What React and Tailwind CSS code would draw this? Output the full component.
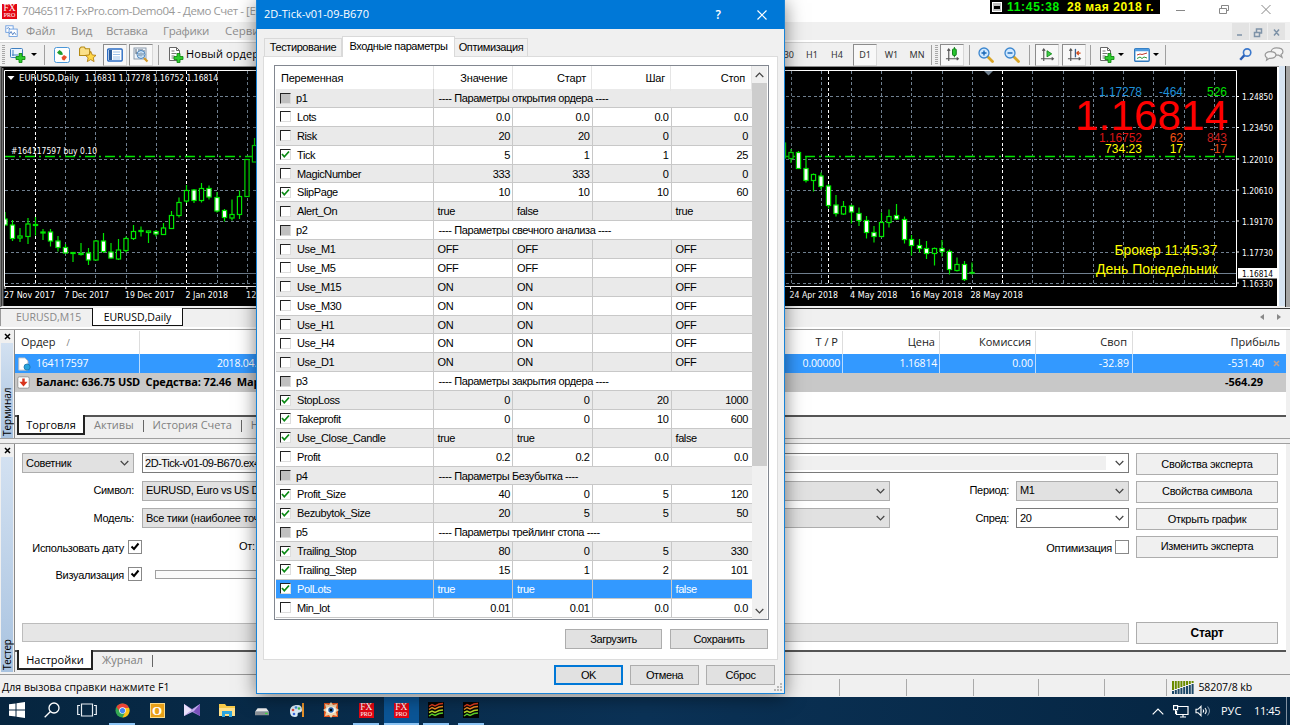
import React from 'react';
import clsx from 'clsx';

const PARAMS = [
  { name: 'p1', section: '---- Параметры открытия ордера ----' },
  { name: 'Lots', values: ['0.0', '0.0', '0.0', '0.0'] },
  { name: 'Risk', values: ['20', '20', '0', '0'] },
  { name: 'Tick', checked: true, values: ['5', '1', '1', '25'] },
  { name: 'MagicNumber', values: ['333', '333', '0', '0'] },
  { name: 'SlipPage', checked: true, values: ['10', '10', '10', '60'] },
  { name: 'Alert_On', text: true, values: ['true', 'false', '', 'true'] },
  { name: 'p2', section: '---- Параметры свечного анализа ----' },
  { name: 'Use_M1', text: true, values: ['OFF', 'OFF', '', 'OFF'] },
  { name: 'Use_M5', text: true, values: ['OFF', 'OFF', '', 'OFF'] },
  { name: 'Use_M15', text: true, values: ['ON', 'ON', '', 'OFF'] },
  { name: 'Use_M30', text: true, values: ['ON', 'ON', '', 'OFF'] },
  { name: 'Use_H1', text: true, values: ['ON', 'ON', '', 'OFF'] },
  { name: 'Use_H4', text: true, values: ['ON', 'ON', '', 'OFF'] },
  { name: 'Use_D1', text: true, values: ['ON', 'ON', '', 'OFF'] },
  { name: 'p3', section: '---- Параметры закрытия ордера ----' },
  { name: 'StopLoss', checked: true, values: ['0', '0', '20', '1000'] },
  { name: 'Takeprofit', checked: true, values: ['0', '0', '10', '600'] },
  { name: 'Use_Close_Candle', checked: true, text: true, values: ['true', 'true', '', 'false'] },
  { name: 'Profit', values: ['0.2', '0.2', '0.0', '0.0'] },
  { name: 'p4', section: '---- Параметры Безубытка ----' },
  { name: 'Profit_Size', checked: true, values: ['40', '0', '5', '120'] },
  { name: 'Bezubytok_Size', checked: true, values: ['20', '5', '5', '50'] },
  { name: 'p5', section: '---- Параметры трейлинг стопа ----' },
  { name: 'Trailing_Stop', checked: true, values: ['80', '0', '5', '330'] },
  { name: 'Trailing_Step', checked: true, values: ['15', '1', '2', '101'] },
  { name: 'PolLots', checked: true, text: true, selected: true, values: ['true', 'true', '', 'false'] },
  { name: 'Min_lot', values: ['0.01', '0.01', '0.0', '0.0'] },
];

// x, wick top, wick bottom, body top, body bottom, filled
const CANDLES = [
  [5, 212, 225, 219, 225, 1], [12.5, 220, 241, 225, 238.5, 1], [20, 228, 242, 236, 238, 0],
  [28, 218, 244, 224, 236.5, 0], [35.5, 217, 235.5, 224.5, 225.5, 0], [43, 229, 240, 232, 233, 0],
  [50.5, 229, 246.5, 232, 241, 1], [58, 236, 251.5, 241, 247.5, 1], [65.5, 244, 253.5, 247.5, 253, 1],
  [73, 252.5, 262, 252.5, 253.5, 0], [81, 243, 255.5, 253.5, 254.5, 0], [88.5, 248, 265, 253, 260, 1],
  [96, 240, 260.5, 241, 260, 0], [103.5, 233, 253, 241, 251.5, 1], [111, 243, 258.5, 252, 258, 1],
  [118.5, 239, 260, 250, 259, 0], [126, 236.5, 252.5, 238.5, 250.5, 0], [133.5, 225, 240, 231.5, 238.5, 0],
  [141, 226.5, 236.5, 230.5, 231.5, 0], [148.5, 230.5, 243, 231, 232.5, 0], [156, 230, 236.5, 231.5, 234, 1],
  [163.5, 223, 235, 228, 234.5, 0], [171.5, 211, 229, 215.5, 228.5, 0], [179, 197.5, 217.5, 202.5, 215.5, 0],
  [186.5, 185, 203, 190.5, 201, 0], [194, 189, 203, 190, 200.5, 1], [201.5, 183, 202.5, 188.5, 200.5, 0],
  [209, 185.5, 199.5, 188.5, 197, 1], [217, 192, 212.5, 197.5, 211, 1], [224.5, 209, 221.5, 210.5, 217.5, 1],
  [232, 199.5, 220.5, 214.5, 218, 0], [239.5, 190.5, 219, 196.5, 214.5, 0], [247, 159, 197, 159.5, 196.5, 0],
  [254.5, 138, 162, 145.5, 162, 0],
  [783.5, 143, 158, 143, 158, 0], [791, 149, 163, 152.5, 158.5, 0], [798.5, 151, 169, 152.5, 168.5, 1],
  [806, 156.5, 182.5, 168.5, 180.5, 1], [813.5, 173.5, 191.5, 174.5, 180.5, 0], [821, 172.5, 189.5, 176, 186.5, 1],
  [828.5, 184, 208.5, 186, 205.5, 1], [836, 195, 216.5, 205, 213.5, 1], [843.5, 201, 215, 206.5, 214, 0],
  [851.5, 204.5, 223.5, 206, 212, 1], [859, 207.5, 226, 213.5, 220.5, 1], [866.5, 216, 238.5, 220.5, 232.5, 1],
  [874, 226, 242.5, 232.5, 236.5, 1], [881.5, 212.5, 237.5, 222.5, 236.5, 0], [889, 209.5, 227.5, 216.5, 222.5, 0],
  [896.5, 204, 220, 215.5, 219, 1], [904.5, 216.5, 243.5, 219.5, 239.5, 1], [911.5, 235, 255.5, 239.5, 245.5, 1],
  [919.5, 239, 252.5, 245.5, 248.5, 1], [926.5, 241, 259, 248.5, 253.5, 1], [934.5, 247.5, 265.5, 248.5, 253.5, 0],
  [942, 240, 256.5, 248.5, 251.5, 1], [949.5, 249.5, 274.5, 251.5, 269.5, 1], [957, 257.5, 271.5, 264.5, 270.5, 0],
  [964.5, 261, 281, 264.5, 279.5, 1], [972, 262.5, 274.5, 272.5, 273, 0],
];

const GRID_X = [65.5, 95.5, 126, 156, 217, 247, 791, 821, 851.5, 881.5, 911.5, 942, 972, 1032.5, 1063, 1093, 1123.5, 1153.5, 1184, 1214];
const GRID_Y = [96.5, 127.5, 159, 190.5, 221.5, 252.5, 283.5];
const PRICES = [
  ['1.24850', 97], ['1.23450', 128], ['1.22010', 159.5], ['1.20610', 190.5],
  ['1.19170', 221.5], ['1.17730', 252.5], ['1.16330', 283.5],
];
const DATES = [
  ['27 Nov 2017', 4, 51], ['7 Dec 2017', 64.5, 44.5], ['19 Dec 2017', 125, 49.5], ['2 Jan 2018', 185.5, 42.5], ['12 Jan 2018', 246, 49],
  ['24 Apr 2018', 789.5, 48.5], ['4 May 2018', 850, 47.5], ['16 May 2018', 910.5, 52], ['28 May 2018', 970.5, 52.5],
];

const Chart = () => (
  <svg className="block shrink-0" width="1290" height="242" viewBox="0 66 1290 242" fontFamily="'DejaVu Sans Condensed', 'DejaVu Sans', sans-serif">
    <rect x="0" y="66" width="1290" height="242" fill="#f0f0f0" />
    <rect x="0" y="66" width="1290" height="1" fill="#8b8b8b" />
    <rect x="1" y="67" width="1276" height="239" fill="#000" />
    <rect x="1277" y="67" width="2" height="239" fill="#fff" />
    <rect x="1279" y="66" width="6" height="240" fill="#d7e4f2" />
    <rect x="1285" y="66" width="1" height="241" fill="#222" />
    <rect x="1286" y="66" width="4" height="241" fill="#a5a5a5" />
    <g stroke="#708090" strokeDasharray="3 2.5" shapeRendering="crispEdges">
      {GRID_X.map((x) => <line key={x} x1={x} x2={x} y1="71" y2="286" />)}
      {GRID_Y.map((y) => <line key={y} x1="5" x2="1237" y1={y} y2={y} />)}
    </g>
    <g stroke="#fff" strokeDasharray="3 2.5" shapeRendering="crispEdges">
      {[35.5, 186.5, 828.5, 1002.5].map((x) => <line key={x} x1={x} x2={x} y1="71" y2="286" />)}
    </g>
    <line x1="5" x2="1237" y1="273.500" y2="273.500" stroke="#708090" />
    <line x1="5" x2="1237" y1="156.500" y2="156.500" stroke="#00e400" strokeWidth="1.300" strokeDasharray="10 4 2 4" />
    {CANDLES.map(([x, wt, wb, bt, bb, filled]) => (
      <g key={x} stroke="#00e600" strokeWidth="1.200">
        <line x1={x} x2={x} y1={wt} y2={wb} />
        <rect x={x - 2.1} y={bt} width="4.200" height={Math.max(bb - bt, 0.5)} fill={filled ? '#fff' : '#000'} />
      </g>
    ))}
    <rect x="0" y="68" width="4" height="238" fill="#000" />
    <rect x="0" y="66" width="1.500" height="241" fill="#777" />
    <rect x="2.300" y="68" width="1" height="238" fill="#aaa" />
    <path d="M4.500 286.500V70.500H1236.500V286.500H4.500" fill="none" stroke="#fff" />
    <path d="M984 71h9l-4.500 4.500z" fill="#708090" />
    <path d="M7.500 76h7l-3.500 4z" fill="#fff" />
    <g stroke="#fff">
      {PRICES.map(([p, y]) => <line key={p} x1="1237" x2="1239" y1={y - 0.5} y2={y - 0.5} />)}
      {DATES.map(([d, x]) => <line key={d} x1={x + 1} x2={x + 1} y1="287" y2="289" />)}
    </g>
    <g fill="#fff" fontSize="9">
      <text x="19" y="81" textLength="60" lengthAdjust="spacingAndGlyphs">EURUSD,Daily</text>
      <text x="85" y="81" textLength="133" lengthAdjust="spacingAndGlyphs">1.16831 1.17278 1.16752 1.16814</text>
      <text x="11" y="154" textLength="86" lengthAdjust="spacingAndGlyphs">#164117597 buy 0.10</text>
      {PRICES.map(([p, y]) => <text key={p} x="1242" y={y + 3.2} textLength="31" lengthAdjust="spacingAndGlyphs">{p}</text>)}
      {DATES.map(([d, x, w]) => <text key={d} x={x} y="298.300" textLength={w} lengthAdjust="spacingAndGlyphs">{d}</text>)}
    </g>
    <rect x="1238" y="268" width="39" height="10.500" fill="#fff" />
    <text x="1242" y="276.700" fontSize="9" textLength="31" lengthAdjust="spacingAndGlyphs">1.16814</text>
    <g fontFamily="'Liberation Sans', sans-serif" fontSize="12" textAnchor="end">
      <text x="1142" y="96" fill="#1e90d8" textLength="43">1.17278</text>
      <text x="1183" y="96" fill="#1e90d8">-464</text>
      <text x="1227" y="96" fill="#00e000">526</text>
      <text x="1142" y="141.500" fill="#dc1414" textLength="43">1.16752</text>
      <text x="1183" y="141.500" fill="#f05014">62</text>
      <text x="1227" y="141.500" fill="#c81e1e">843</text>
      <text x="1142" y="153" fill="#ff0" textLength="37">734:23</text>
      <text x="1183" y="153" fill="#ff0">17</text>
      <text x="1227" y="153" fill="#e04614">-17</text>
      <text x="1228" y="129.500" fill="#f00" fontSize="42" textLength="153">1.16814</text>
      <text x="1217.500" y="255" fill="#ff0" fontSize="14" textLength="103" lengthAdjust="spacingAndGlyphs">Брокер 11:45:37</text>
      <text x="1218" y="274" fill="#ff0" fontSize="14" textLength="122" lengthAdjust="spacingAndGlyphs">День Понедельник</text>
    </g>
  </svg>
);

const Svg = ({ size = 16, children, className }) => (
  <svg width={size} height={size} viewBox="0 0 16 16" fill="none" className={clsx('shrink-0', className)}>{children}</svg>
);

const Plus = () => <path d="M9 6.500h3v3h3v3h-3v3H9v-3H6v-3h3z" fill="#2ecc2e" stroke="#078007" strokeWidth=".8" />;

const NewChartIcon = () => (
  <Svg>
    <rect x=".5" y="1.500" width="12" height="9" rx="1" fill="#eaf4ff" stroke="#3f7fbf" />
    <path d="M3 3v6M2 8h6" stroke="#3f7fbf" />
    <Plus />
  </Svg>
);

const DocPlusIcon = () => (
  <Svg>
    <path d="M1.500.500h7l3 3v10h-10z" fill="#fff" stroke="#666" />
    <path d="M8.500.500v3h3" stroke="#666" />
    <path d="M3.500 4h3M3.500 6.500h5M3.500 9h3M3.500 11h3" stroke="#777" />
    <Plus />
  </Svg>
);

const MarketIcon = () => (
  <Svg>
    <rect x=".5" y=".5" width="15" height="15" rx="2" fill="#fff" stroke="#4a97d8" />
    <path d="M3 5.500L5.500 3 8 5l1 2.500-2 .5-2-.5z" fill="#1f9e2c" />
    <path d="M7.500 10.500L10 8l3 2-2.500 3.500-2-.5z" fill="#e8502a" />
  </Svg>
);

const NavigatorIcon = () => (
  <Svg size={17}>
    <path d="M.5 9V2.500L2 1h3l1 1.500h4V9z" fill="#fbe08a" stroke="#b48a14" />
    <path d="M11 5l1.500 3.400 3.500.4-2.600 2.300.8 3.600-3.200-1.900-3.200 1.900.8-3.600L6 8.800l3.500-.4z" fill="#ffd84a" stroke="#b07a08" strokeWidth=".8" />
  </Svg>
);

const TerminalIcon = () => (
  <Svg>
    <rect x=".7" y="2" width="14.500" height="12" rx="1" fill="#fff" stroke="#2b6cc4" strokeWidth="1.400" />
    <path d="M2 3h3v10H2z" fill="#2d5d9a" />
    <path d="M6 5h7M6 7.500h7M6 10h7M6 12h7" stroke="#9ec3ea" />
  </Svg>
);

const TesterIcon = () => (
  <Svg>
    <rect x="1" y="1" width="12" height="11" fill="#eef4fa" stroke="#8a9aac" />
    <path d="M3 2v5M3 6h2M11 3v5M5 3h5" stroke="#5a6b7c" />
    <circle cx="8" cy="7.500" r="4" fill="#cfe6fb" stroke="#4d86be" />
    <path d="M6 6v3M8 5.500v4M10 6v2.500" stroke="#46637e" strokeWidth=".8" />
    <path d="M11 11l3.500 3.500" stroke="#d49a28" strokeWidth="2.200" />
  </Svg>
);

const ZoomIcon = ({ plus }) => (
  <Svg>
    <path d="M9.500 9.500l5 5" stroke="#d9a526" strokeWidth="2.800" strokeLinecap="round" />
    <circle cx="6" cy="6" r="5" fill="#cfe8ff" stroke="#3d87cf" strokeWidth="1.300" />
    <path d={plus ? 'M3.500 6h5M6 3.500v5' : 'M3.500 6h5'} stroke="#1565b5" strokeWidth="1.400" />
  </Svg>
);

const AxesIcon = ({ children }) => (
  <Svg size={15}>
    <path d="M4 2v13M2.500 4L4 2l1.500 2M1 12.500h13M12.500 11l1.800 1.500-1.800 1.500" stroke="#555" strokeWidth="1.200" />
    {children}
  </Svg>
);

const TemplateIcon = () => (
  <Svg>
    <rect x=".7" y="1.700" width="14.500" height="12.500" rx="1" fill="#fff" stroke="#2e78bd" strokeWidth="1.400" />
    <path d="M1 3h14" stroke="#4f9be0" strokeWidth="2.500" />
    <path d="M3 8l3-1 2 .5L13 6" stroke="#c0392b" />
    <path d="M3 11.500l3-1.500 2 1.500 2-1.500 3 1" stroke="#2a9a3a" />
  </Svg>
);

const Sep = ({ className }) => <div className={clsx('h-5 w-px bg-[#a0a0a0]', className)} />;
const Grip = ({ className }) => <div className={clsx('h-5 w-[3px] bg-[repeating-linear-gradient(#a8a8a8_0_1px,#f0f0f0_1px_2px)]', className)} />;
const Caret = ({ className }) => <div className={clsx('h-0 w-0 border-x-[3px] border-t-[3px] border-x-transparent border-t-black', className)} />;
const Pressed = ({ children, className }) => (
  <div className={clsx('flex h-[22px] w-6 items-center justify-center border border-[#d8d8d8] border-t-[#8c8c8c] border-l-[#8c8c8c] bg-[#f8f8f8]', className)}>
    {children}
  </div>
);

const Toolbar = () => (
  <div className="flex h-[24px] shrink-0 justify-between border-t border-[#d4d4d4] bg-[#f0f0f0] font-['Noto_Sans',sans-serif] text-[9px]">
    <div className="flex items-center pl-[2px]">
      <Grip />
      <div className="ml-[5px]"><NewChartIcon /></div>
      <Caret className="ml-[5px]" />
      <Sep className="ml-[7px]" />
      <div className="ml-[9px]"><MarketIcon /></div>
      <div className="ml-[9px]"><NavigatorIcon /></div>
      <Pressed className="ml-[7px]"><TerminalIcon /></Pressed>
      <Pressed className="ml-[2px]"><TesterIcon /></Pressed>
      <Sep className="ml-[5px]" />
      <div className="ml-[9px]"><DocPlusIcon /></div>
      <span className="ml-[2px] font-['Open_Sans',sans-serif] text-[11px] tracking-[0.1px] text-black">Новый ордер</span>
    </div>
    <div className="flex w-[515px] items-center text-[#333]">
      <span className="w-[19px] text-right">M30</span>
      <span className="ml-[11px] w-[14px] text-center">H1</span>
      <span className="ml-[11px] w-[14px] text-center">H4</span>
      <Pressed className="ml-[9px]">D1</Pressed>
      <span className="ml-[7px] w-[15px] text-center">W1</span>
      <span className="ml-[10px] w-[16px] text-center">MN</span>
      <Sep className="ml-[6px]" />
      <Grip className="ml-[3px]" />
      <Pressed className="ml-[2px]">
        <AxesIcon>
          <path d="M10 0v11" stroke="#0b7a14" />
          <rect x="8" y="2" width="4" height="7" rx="1" fill="#28c52f" stroke="#0b7a14" />
        </AxesIcon>
      </Pressed>
      <Sep className="ml-[5px]" />
      <div className="ml-[8px]"><ZoomIcon plus /></div>
      <div className="ml-[10px]"><ZoomIcon /></div>
      <Sep className="ml-[9px]" />
      <Pressed className="ml-[5px]">
        <AxesIcon><path d="M7.500 4v6.500l5-3.200z" fill="#3ecf46" stroke="#128a1a" /></AxesIcon>
      </Pressed>
      <Pressed className="ml-[3px]">
        <AxesIcon><path d="M9 2v9" stroke="#3a5f8a" strokeWidth="1.400" /><path d="M14.500 6.500h-4M12.500 4.500l-2 2 2 2" stroke="#d04a18" strokeWidth="1.300" /></AxesIcon>
      </Pressed>
      <Sep className="ml-[4px]" />
      <div className="ml-[8px]"><DocPlusIcon /></div>
      <Caret className="ml-[3px]" />
      <div className="ml-[10px]"><TemplateIcon /></div>
      <Caret className="ml-[3px]" />
      <Sep className="ml-[6px]" />
      <Svg size={13} className="ml-[73px]">
        <circle cx="10" cy="5.500" r="4.500" stroke="#3b78cc" strokeWidth="2" />
        <path d="M6.500 9L1.500 14.500" stroke="#2c5fb5" strokeWidth="3" />
      </Svg>
      <svg className="ml-[12px] shrink-0" width="21" height="15" viewBox="0 0 22 16" fill="#f4f4f4" stroke="#999" strokeWidth="1.300">
        <path d="M13 1c4 0 7 1.500 7 4 0 1.500-1 2.500-2 3l1 3-3.500-2.300C11 9 7.500 7.500 7.500 5S10 1 13 1z" />
        <path d="M6.500 5C3 5 1 6.700 1 8.500s1 2.500 2 3L2.500 14l3-2c4 .3 7-1 7-3.500S10 5 6.500 5z" />
      </svg>
    </div>
  </div>
);

const FxLogo = ({ size = 15 }) => (
  <div className="flex flex-col items-center justify-center overflow-hidden bg-[#e30613] font-['Liberation_Serif',serif] text-white" style={{ width: size, height: size }}>
    <span className="text-[9.500px] leading-[8px]">FX</span>
    <span className="text-[6px] leading-[6px]">PRO</span>
  </div>
);

const WindowHeader = () => (
  <>
    <div className="flex h-[22px] shrink-0 items-center justify-between bg-white">
      <div className="flex items-center pl-[2px]">
        <FxLogo />
        <span className="ml-[5px] font-['Open_Sans',sans-serif] text-[11.500px] tracking-[-0.45px] whitespace-nowrap text-[#999]">70465117: FxPro.com-Demo04 - Демо Счет - [EURUSD,Daily]</span>
      </div>
      <div className="flex items-start self-start">
        <div className="flex h-[14px] w-[170px] items-center bg-black pl-[2px] font-['Liberation_Sans',sans-serif] text-[12px] font-bold whitespace-nowrap">
          <span className="flex h-[10px] w-[10px] items-center justify-center border border-white bg-[#c0c0c0]"><i className="h-[3px] w-[6px] bg-black" /></span>
          <span className="ml-[5px] tracking-[0.7px] text-[#00f000]">11:45:38</span>
          <span className="ml-[7px] tracking-[0.55px] text-[#ffff00]">28 мая 2018 г.</span>
        </div>
        <svg width="130" height="20" viewBox="0 0 130 20" fill="none" stroke="#888">
          <path d="M16 10.500h9M59.500 8.500h7v5h-7zM61.500 8.500v-3h7v5h-2M101.500 5l9 9M110.500 5l-9 9" />
        </svg>
      </div>
    </div>
    <div className="flex h-[18px] shrink-0 items-center bg-[#f0f0f0] pl-[5px] font-['Open_Sans',sans-serif] text-[11.500px] text-[#8d8d8d]">
      <Svg size={13}>
        <rect x="1" y="1" width="9" height="8" fill="#fff" stroke="#5b93dd" />
        <rect x="5" y="5" width="10" height="9" fill="#fff" stroke="#5b93dd" />
        <path d="M5.500 11l2-3 2 4 2-3 2 3M2 5l2-2 2 2" stroke="#3c70bb" />
      </Svg>
      <span className="ml-[8px] w-[45px]">Файл</span>
      <span className="w-[35px]">Вид</span>
      <span className="w-[57px] tracking-[-0.3px]">Вставка</span>
      <span className="w-[62px] tracking-[-0.3px]">Графики</span>
      <span className="w-[60px]">Сервис</span>
      <div className="mr-[5px] ml-auto flex gap-px">
        <svg width="53" height="17" viewBox="0 0 53 17" fill="none">
          <path d="M0 0h17v17H0zM18 0h17v17H18zM36 0h17v17H36z" fill="#e3e3e3" />
          <path d="M5 12h5M22.500 9.500h5v4h-5zM24.500 9.500v-3.500h5v4h-2M42 6.500l5 6M47 6.500l-5 6" stroke="#7f93a8" strokeWidth="1.500" />
        </svg>
      </div>
    </div>
    <div className="h-[2px] shrink-0 bg-white" />
  </>
);

const ChartTabs = () => (
  <div className="flex h-[19px] shrink-0 justify-between bg-[#f0f0f0] font-['Open_Sans',sans-serif] text-[10.500px]">
    <div className="flex w-full border-t border-[#333]">
      <span className="h-[17px] w-[92px] border-l border-[#999] pl-[15px] leading-[17px] text-[#888]">EURUSD,M15</span>
      <span className="-mt-px h-[18px] w-[91px] border border-t-0 border-[#111] bg-white text-center leading-[18px] text-black">EURUSD,Daily</span>
      <div className="mt-[5px] mr-[9px] ml-auto flex gap-[13px]">
        <i className="h-0 w-0 border-y-[3px] border-r-[4px] border-y-transparent border-r-[#888]" />
        <i className="h-0 w-0 border-y-[3px] border-l-[4px] border-y-transparent border-l-[#888]" />
      </div>
    </div>
  </div>
);

const SideStrip = ({ label }) => (
  <div className="flex w-[14px] shrink-0 flex-col items-center bg-[#f0f0f0]">
    <svg className="my-[3px] shrink-0" width="7" height="7" viewBox="0 0 7 7" stroke="#000" strokeWidth="1.500"><path d="M1 1l5 5M6 1L1 6" /></svg>
    <div className="flex w-3 grow items-start bg-linear-to-b from-[#d3e1f1] to-[#a9c3e0] [writing-mode:vertical-rl]">
      <span className="h-full rotate-180 pt-[2px] font-['Open_Sans',sans-serif] text-[10px] leading-[12px] text-black">{label}</span>
    </div>
  </div>
);

const PanelTabs = ({ active, activeClass, rest }) => (
  <div className="flex h-[21px] shrink-0 border-t-2 border-[#555] bg-[#f0f0f0] pl-[2px] text-[11px] text-[#808080]">
    <span className={clsx('-mt-[2px] h-[20px] border-2 border-t-0 border-[#222] bg-white text-center leading-[19px] text-black', activeClass)}>{active}</span>
    {rest.map((t) => (
      <span key={t} className="flex h-[17px] items-center whitespace-nowrap">
        <span className="px-[9px]">{t}</span>
        <i className="h-3 w-px bg-[#666]" />
      </span>
    ))}
  </div>
);

const TERMINAL_GRID = 'grid grid-cols-[125px_703px_97px_96px_97px_153px] items-stretch';

const Terminal = () => (
  <div className="flex h-[110px] shrink-0 border-t border-b border-[#a0a0a0] bg-[#f0f0f0] font-['Open_Sans',sans-serif] text-[11px]">
    <SideStrip label="Терминал" />
    <div className="mr-[4px] flex grow flex-col border-l border-[#888] bg-white pt-px">
      <div className={clsx(TERMINAL_GRID, 'h-[23px] leading-[22px] text-[#222] [&>*]:border-r [&>*]:border-[#ddd]')}>
        <span className="pl-[6px]">Ордер <span className="ml-[8px] text-[9px] text-[#777]">/</span></span>
        <span className="pr-[4px] text-right">T / P</span>
        <span className="pr-[4px] text-right">Цена</span>
        <span className="pr-[4px] text-right">Комиссия</span>
        <span className="pr-[5px] text-right">Своп</span>
        <span className="border-r-0! pr-[6px] text-right">Прибыль</span>
      </div>
      <div className={clsx(TERMINAL_GRID, 'h-[19px] bg-[#3399ff] text-[10.500px] leading-[19px] text-white [&>*]:border-r [&>*]:border-[#b9dcff]')}>
        <span className="flex items-center pl-[2px]">
          <Svg size={14}>
            <path d="M2 1h7l3.500 3.500V15H2z" fill="#fff" stroke="#bbb" />
            <circle cx="11.500" cy="11.500" r="3.500" fill="#27a3dc" stroke="#1a78b0" />
          </Svg>
          <span className="ml-[5px] tracking-[-0.2px]">164117597</span>
        </span>
        <span className="flex justify-between pr-[2px] pl-[77px] tracking-[-0.2px]"><span>2018.04.</span><span>0.00000</span></span>
        <span className="pr-[2px] text-right tracking-[-0.2px]">1.16814</span>
        <span className="pr-[2px] text-right">0.00</span>
        <span className="pr-[3px] text-right">-32.89</span>
        <span className="flex items-center justify-end border-r-0! pr-[6px]">
          -531.40
          <svg className="ml-[9px]" width="7" height="7" viewBox="0 0 7 7" stroke="#c0a090" strokeWidth="1.600"><path d="M1 1l5 5M6 1L1 6" /></svg>
        </span>
      </div>
      <div className="flex h-[19px] items-center bg-[#c8c8c8] pr-[23px] pl-[2px] text-[11px] font-bold whitespace-pre text-black">
        <Svg size={13}>
          <rect x="1" y="1" width="14" height="14" rx="2" fill="#fff" stroke="#888" />
          <path d="M6.500 3h3v4H13l-5 6-5-6h3.500z" fill="#d8341c" />
        </Svg>
        <span className="ml-[6px] tracking-[-0.12px]">Баланс: 636.75 USD  Средства: 72.46  Маржа</span>
        <span className="ml-auto">-564.29</span>
      </div>
      <div className="grow" />
      <PanelTabs active="Торговля" activeClass="w-[68px]" rest={['Активы', 'История Счета', 'Новости']} />
      <div className="h-[2px] bg-[#f0f0f0]" />
    </div>
  </div>
);

const Chevron = ({ up }) => (
  <svg width="9" height="6" viewBox="0 0 9 6" fill="none" stroke="#444" strokeWidth="1.200" className="shrink-0">
    <path d={up ? 'M.7 5l3.800-4 3.800 4' : 'M.7 1l3.800 4 3.800-4'} />
  </svg>
);

const Select = ({ children, white, className }) => (
  <div className={clsx('flex h-[20px] items-center justify-between border pr-[4px] pl-[3px] whitespace-nowrap', white ? 'border-[#7a7a7a] bg-white' : 'border-[#adadad] bg-[#e1e1e1]', className)}>
    <span>{children}</span>
    <Chevron />
  </div>
);

const CheckBox = ({ checked }) => (
  <div className="flex h-[14px] w-[14px] items-center justify-center border border-[#888] bg-white">
    {checked && <svg width="10" height="10" viewBox="0 0 10 10" fill="none" stroke="#000" strokeWidth="2"><path d="M1.500 4.500L4 7l4.500-5.500" /></svg>}
  </div>
);

const Button = ({ children, className }) => (
  <button className={clsx('flex items-center justify-center border', className)}>{children}</button>
);

const TesterPanel = () => (
  <div className="mt-[4px] flex h-[229px] shrink-0 border-t border-[#a0a0a0] bg-[#f0f0f0] font-['Liberation_Sans',sans-serif] text-[11px] tracking-[-0.3px] text-black">
    <SideStrip label="Тестер" />
    <div className="mr-[4px] flex grow flex-col border-l border-[#888] bg-white">
      <div className="flex grow gap-[7px] pt-[9px] pr-[8px] pl-[7px]">
        <div className="flex w-[1107px] flex-col">
          <div className="flex h-[20px] gap-[8px]">
            <Select className="w-[112px]">Советник</Select>
            <div className="flex h-[20px] grow items-center border border-[#7a7a7a] bg-white p-[2px] pr-[4px]">
              <span className="h-full grow bg-[#f0f0f0] leading-[14px] tracking-[-0.45px]">2D-Tick-v01-09-B670.ex4</span>
              <span className="ml-[9px]"><Chevron /></span>
            </div>
          </div>
          <div className="mt-[7.500px] flex h-[20px] items-center gap-[8px]">
            <span className="w-[112px] text-right">Символ:</span>
            <Select className="w-[748px]">EURUSD, Euro vs US Dollar</Select>
            <span className="ml-auto">Период:</span>
            <Select className="-ml-px w-[113px]">M1</Select>
          </div>
          <div className="mt-[7.500px] flex h-[20px] items-center gap-[8px]">
            <span className="w-[112px] text-right">Модель:</span>
            <Select className="w-[748px]">Все тики (наиболее точный метод)</Select>
            <span className="ml-auto">Спред:</span>
            <Select white className="-ml-px w-[113px]">20</Select>
          </div>
          <div className="mt-[12px] flex h-[14px] items-center">
            <span className="w-[102px] pt-[2px] text-right tracking-[-0.3px] whitespace-nowrap">Использовать дату</span>
            <div className="ml-[4px]"><CheckBox checked /></div>
            <span className="ml-[97px] pb-[2px]">От:</span>
            <span className="mr-[3px] ml-auto pt-[2px]">Оптимизация</span>
            <CheckBox />
          </div>
          <div className="mt-[13px] flex h-[14px] items-center">
            <span className="w-[102px] pt-[2px] text-right">Визуализация</span>
            <div className="ml-[4px]"><CheckBox checked /></div>
            <div className="ml-[13px] h-[9px] w-[400px] border border-[#a0a0a0] bg-[#fafafa]" />
          </div>
          <div className="mt-auto mb-[8px] h-[19px] border border-[#bcbcbc] bg-[#e6e6e6]" />
        </div>
        <div className="flex w-[142px] flex-col gap-[5.500px]">
          {['Свойства эксперта', 'Свойства символа', 'Открыть график', 'Изменить эксперта'].map((t) => (
            <Button key={t} className="h-[22px] border-[#adadad] bg-[#f0f0f0]">{t}</Button>
          ))}
          <Button className="mt-auto mb-[6px] h-[22px] border-[#adadad] bg-[#f0f0f0] text-[12px] font-bold">Старт</Button>
        </div>
      </div>
      <div className="font-['Open_Sans',sans-serif] tracking-normal">
        <PanelTabs active="Настройки" activeClass="w-[76px]" rest={['Журнал']} />
      </div>
      <div className="h-px bg-[#f0f0f0]" />
    </div>
  </div>
);

const StatusBar = () => (
  <div className="mt-[2px] flex h-[23px] shrink-0 items-center justify-between border-t border-[#999] bg-[#f0f0f0] pt-[3px] font-['Open_Sans',sans-serif] text-[10.500px] text-black">
    <span className="pl-[2px] tracking-[0.05px]">Для вызова справки нажмите F1</span>
    <div className="flex h-[17px] items-center [&>i]:h-full [&>i]:w-px [&>i]:bg-[#aaa]">
      <i /><i className="ml-[66px]" /><i className="ml-[66px]" /><i className="ml-[64px]" /><i className="ml-[65px]" /><i className="ml-[61px]" />
      <svg className="ml-[5px]" width="22" height="13" viewBox="0 0 22 13">
        {[0, 1, 2, 3, 4, 5, 6, 7].map((i) => (
          <g key={i}>
            <rect x={i * 2.8} y="0" width="2" height={9 - i} fill="#6b8c00" />
            <rect x={i * 2.8} y={10 - i} width="2" height={3 + i} fill="#1c4868" />
          </g>
        ))}
      </svg>
      <span className="mr-[38px] ml-[4px] tracking-[-0.1px]">58207/8 kb</span>
    </div>
  </div>
);

const ChartsIcon = () => (
  <Svg>
    <rect width="16" height="16" fill="#050505" />
    <path d="M1 4.500l3-2 3 1.500 4-2 4-.5" stroke="#e03a1c" strokeWidth="1.400" />
    <path d="M1 7.500l3-2 3 1.500 4-2 4-.5" stroke="#f08a24" strokeWidth="1.400" />
    <path d="M1 10.500l3-1.500 3 1.500 4-2 4-.5" stroke="#b8d828" strokeWidth="1.400" />
    <path d="M1 14l3-2 3 1.500 4-2 4-.5" stroke="#5ad028" strokeWidth="1.400" />
  </Svg>
);

const TASKS = [
  { id: 'start', icon: <Svg><path d="M0 2.300l6.500-.9v6.100H0zM7.500 1.200L16 0v7.500H7.500zM0 8.500h6.500v6.100L0 13.700zM7.500 8.500H16V16l-8.500-1.200z" fill="#fff" /></Svg> },
  { id: 'search', icon: <Svg><circle cx="10" cy="6" r="5" stroke="#fff" strokeWidth="1.300" /><path d="M6.500 9.500L.7 15.300" stroke="#fff" strokeWidth="1.300" /></Svg> },
  { id: 'view', icon: <svg width="20" height="14" viewBox="0 0 20 14" fill="none" stroke="#e8eef4" strokeWidth="1.200"><path d="M4.500 1h11v12h-11zM3 2.500H.7v9H3M17 2.500h2.300v9H17" /></svg> },
  {
    id: 'chrome', open: true,
    icon: (
      <Svg size={15}>
        <circle cx="8" cy="8" r="7.500" fill="#34a853" />
        <path d="M1.500 4.300A7.500 7.500 0 0115 5.300H8A3 3 0 005.300 9z" fill="#ea4335" />
        <path d="M15 5.300A7.500 7.500 0 018 15.500L11 9.500 9.500 5.300z" fill="#fbc116" />
        <circle cx="8" cy="8" r="3.500" fill="#fff" /><circle cx="8" cy="8" r="2.800" fill="#4285f4" />
      </Svg>
    ),
  },
  { id: 'outlook', icon: <div className="flex h-[15px] w-[15px] items-center justify-center border border-[#f7d98a] bg-[#e8a018] font-['Liberation_Serif',serif] text-[13px] leading-none font-bold text-white">O</div> },
  { id: 'vs', icon: <Svg><path d="M0 2l8 5 8-5v12L8 10l-8 4z" fill="#9a7fd0" /><path d="M0 2l8 6-8 6z" fill="#e9e0fa" /><path d="M16 2v12L9 9z" fill="#7b52bd" /><path d="M0 14L16 2l-6 7-2 1z" fill="#c5b2ee" /></Svg> },
  { id: 'files', icon: <Svg><path d="M0 2h6l1.500 2H16v10H0z" fill="#f7c948" /><path d="M0 6h16v8H0z" fill="#ffe08a" /><path d="M3 15V9h10v6h-3v-3H6v3z" fill="#2ea6e0" /></Svg> },
  { id: 'drive', icon: <Svg size={14}><path d="M3 6h10l3 4H0z" fill="#eee" /><path d="M0 10h16v4H0z" fill="#8c9298" /><path d="M11.500 12h3" stroke="#3ade3a" strokeWidth="1.500" /></Svg> },
  { id: 'paint', icon: <Svg><path d="M1 9c0-4 3-6 7-6s5 2 5 5-3 2-4 3 1 4-3 4-5-3-5-6z" fill="#dcecf6" /><circle cx="4" cy="8" r="1.300" fill="#e04a3a" /><circle cx="7" cy="5.500" r="1.300" fill="#3a8ae0" /><circle cx="10" cy="6.500" r="1.300" fill="#4ac04a" /><circle cx="5" cy="12" r="1.300" fill="#3a6ae0" /><path d="M14 1v14" stroke="#e8922a" strokeWidth="2" /></Svg> },
  { id: 'eye', icon: <Svg><rect x="1" y="1" width="14" height="14" fill="#e4541c" /><path d="M8 0l2 3 4-1-1 4 3 2-3 2 1 4-4-1-2 3-2-3-4 1 1-4-3-2 3-2-1-4 4 1z" fill="#f3d9b0" /><ellipse cx="8" cy="8" rx="5" ry="3.500" fill="#fff" /><circle cx="8" cy="8" r="2.700" fill="#2464a8" /><circle cx="8" cy="8" r="1.200" fill="#000" /></Svg> },
  { id: 'fx1', open: true, icon: <FxLogo /> },
  { id: 'fx2', open: true, active: true, icon: <FxLogo /> },
  { id: 'charts1', open: true, icon: <ChartsIcon /> },
  { id: 'charts2', open: true, icon: <ChartsIcon /> },
];

const Taskbar = () => (
  <div className="flex h-[28px] shrink-0 justify-between bg-linear-to-r from-[#06253f] via-[#0b3256] to-[#052440] font-['Open_Sans',sans-serif] text-[11px] text-white">
    <div className="flex">
      {TASKS.map(({ id, icon, open, active }) => (
        <div key={id} className={clsx('flex w-[34.9px] flex-col items-center', active && 'bg-[#0b5596]')}>
          <div className="flex h-[26px] items-center">{icon}</div>
          {open && <div className={clsx('h-[2px] bg-[#8cc4f4]', active ? 'w-full' : 'w-[26px]')} />}
        </div>
      ))}
    </div>
    <div className="flex items-center">
      <svg width="12" height="7" viewBox="0 0 12 7" fill="none" stroke="#fff" strokeWidth="1.200"><path d="M.7 6.300L6 1l5.300 5.300" /></svg>
      <svg className="ml-[9px]" width="16" height="13" viewBox="0 0 16 13" fill="none" stroke="#fff" strokeWidth="1.200"><path d="M5 1.500h10v8H3.500V6M7 12h6M10 9.500V12M.6.6h4v4h-4zM2.600 4.600V9" /></svg>
      <svg className="ml-[6px]" width="16" height="12" viewBox="0 0 16 12" fill="none" stroke="#fff" strokeWidth="1.100"><path d="M1 4.300h2L6 1.300v9.400l-3-3H1zM8 4.500q1.200 1.500 0 3M10 3q2.500 3 0 6" /><path d="M12.500 1.500q4 4.500 0 9" stroke="#7d92a6" /></svg>
      <span className="ml-[10px] w-[33px] text-[11px]">РУС</span>
      <span className="w-[32px] text-[11px] tracking-[-0.4px]">11:45</span>
      <div className="h-[28px] w-[4px] border-l border-[#8090a0]" />
    </div>
  </div>
);

const ParamCheck = ({ checked, disabled }) => (
  <div className={clsx('flex h-[11px] w-[11px] shrink-0 items-center justify-center border border-t-[#222] border-r-[#ddd] border-b-[#ddd] border-l-[#222]', disabled ? 'bg-[#c0c0c0]' : 'bg-white')}>
    {checked && <svg width="9" height="9" viewBox="0 0 9 9" fill="none" stroke="#0a8a14" strokeWidth="1.700"><path d="M1 4l2.300 2.800L8 1.500" /></svg>}
  </div>
);

const ParamRow = ({ row, odd }) => (
  <div className={clsx('grid h-[18.875px] grid-cols-[157.5px_79.5px_79.5px_79px_80.5px] border-b border-[#c8c8c8] leading-[18px]', row.selected ? 'bg-[#3399ff] text-white' : odd ? 'bg-white' : 'bg-[#eaeaea]')}>
    <div className="flex items-center border-r border-[#c8c8c8] pl-[4px]">
      <ParamCheck checked={row.checked} disabled={Boolean(row.section)} />
      <span className={row.section ? 'ml-[5px]' : 'ml-[6px]'}>{row.name}</span>
    </div>
    {row.section
      ? <div className="col-span-4 pl-[5px]">{row.section}</div>
      : row.values.map((v, i) => (
        <div key={i} className={clsx('border-[#c8c8c8]', i < 3 && 'border-r', row.text ? 'pl-[4px]' : 'text-right', !row.text && (i < 3 ? 'pr-[2px]' : 'pr-[4px]'))}>{v}</div>
      ))}
  </div>
);

const Dialog = () => (
  <div className="absolute top-0 left-[256px] flex h-[694px] w-[529px] flex-col border border-t-0 border-[#1883d7] bg-[#f0f0f0] font-['Liberation_Sans',sans-serif] text-[11px] tracking-[-0.4px] text-black shadow-[0_3px_18px_rgba(0,0,0,0.5)]">
    <div className="flex h-[29px] shrink-0 items-center bg-[#0078d7] pl-[7px] font-['Open_Sans',sans-serif] text-[11px] tracking-normal text-white">
      <span>2D-Tick-v01-09-B670</span>
      <span className="mr-[36px] ml-auto text-[12px] font-semibold">?</span>
      <svg className="mr-[17px]" width="10" height="10" viewBox="0 0 10 10" stroke="#fff" strokeWidth="1.200"><path d="M.5.500l9 9M9.500.500l-9 9" /></svg>
    </div>
    <div className="mx-[6px] flex h-[27px] shrink-0 items-end">
      <span className="ml-px h-[18px] w-[78px] border border-b-0 border-[#d9d9d9] text-center leading-[17px]">Тестирование</span>
      <span className="relative -mb-px h-[21px] w-[113px] border border-b-0 border-[#d9d9d9] bg-white text-center leading-[18px]">Входные параметры</span>
      <span className="h-[18px] w-[73px] border border-b-0 border-l-0 border-[#d9d9d9] text-center leading-[17px]">Оптимизация</span>
    </div>
    <div className="mx-[6px] flex h-[604px] shrink-0 flex-col border border-[#dcdcdc] bg-white px-[10px] pt-[8px]">
      <div className="flex h-[555px] w-[495px] border border-[#828790]">
        <div className="w-[477px]">
          <div className="grid h-[23px] grid-cols-[158.5px_79px_79.5px_79px_81px] leading-[25px] tracking-[-0.2px] [&>*]:border-r [&>*]:border-[#e5e5e5]">
            <span className="pl-[6px]">Переменная</span>
            <span className="pr-[4px] text-right">Значение</span>
            <span className="pr-[5px] text-right">Старт</span>
            <span className="pr-[5px] text-right">Шаг</span>
            <span className="pr-[6px] text-right">Стоп</span>
          </div>
          <div className="pl-px">
            {PARAMS.map((row, i) => <ParamRow key={row.name} row={row} odd={i % 2 === 1} />)}
          </div>
        </div>
        <div className="flex w-[15px] flex-col items-center bg-[#f0f0f0]">
          <div className="flex h-[17px] items-center"><Chevron up /></div>
          <div className="h-[383px] w-full bg-[#cdcdcd]" />
          <div className="mt-auto flex h-[17px] items-center"><Chevron /></div>
        </div>
      </div>
      <div className="mt-[9px] flex justify-end gap-[8px]">
        <Button className="h-[20px] w-[97px] border-[#adadad] bg-[#e1e1e1]">Загрузить</Button>
        <Button className="-mr-px h-[20px] w-[98px] border-[#adadad] bg-[#e1e1e1]">Сохранить</Button>
      </div>
    </div>
    <div className="mt-[5px] flex shrink-0 justify-end gap-[7px] pr-[9px]">
      <Button className="h-[20px] w-[69px] border-2 border-[#0078d7] bg-[#e1e1e1]">OK</Button>
      <Button className="h-[20px] w-[69px] border-[#adadad] bg-[#e1e1e1]">Отмена</Button>
      <Button className="h-[20px] w-[69px] border-[#adadad] bg-[#e1e1e1]">Сброс</Button>
    </div>
    <svg className="-mt-[2px] mr-[2px] ml-auto shrink-0" width="8" height="8" viewBox="0 0 8 8" fill="#b8b8b8">
      <path d="M6 0h2v2H6zM3 3h2v2H3zM6 3h2v2H6zM0 6h2v2H0zM3 6h2v2H3zM6 6h2v2H6z" />
    </svg>
  </div>
);

const App = () => (
  <div className="relative flex h-[725px] w-[1290px] flex-col overflow-hidden bg-[#f0f0f0]">
    <WindowHeader />
    <Toolbar />
    <Chart />
    <ChartTabs />
    <div className="h-[2px] shrink-0 bg-white" />
    <Terminal />
    <TesterPanel />
    <StatusBar />
    <Taskbar />
    <Dialog />
  </div>
);

export default App;
